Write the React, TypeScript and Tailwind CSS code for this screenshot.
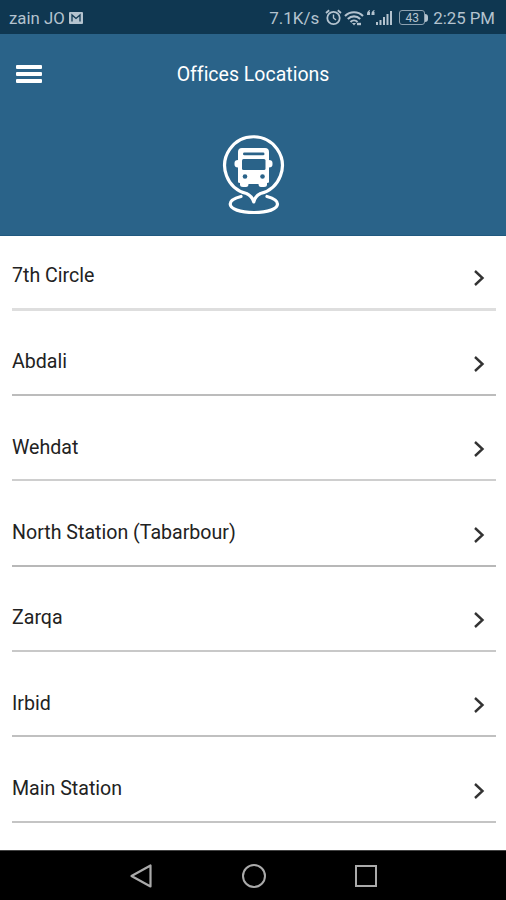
import React from "react";

const offices = [
  { name: "7th Circle", line: "h-[3px] bg-[#dedede]" },
  { name: "Abdali", line: "h-[2px] bg-[#bcbcbc]" },
  { name: "Wehdat", line: "h-[2px] bg-[#cecece]" },
  { name: "North Station (Tabarbour)", line: "h-[2px] bg-[#b8b8b8]" },
  { name: "Zarqa", line: "h-[2px] bg-[#c8c8c8]" },
  { name: "Irbid", line: "h-[2px] bg-[#c0c0c0]" },
  { name: "Main Station", line: "h-[2px] bg-[#c4c4c4]" },
];

function StatusBar() {
  return (
    <div className="flex h-[34px] items-center justify-between bg-[#0f3751] pt-[3px] pr-[11px] pl-[9px] text-[#b4c3cf]">
      <div className="flex items-center">
        <span className="pt-px text-[16.8px] whitespace-nowrap">zain JO</span>
        <svg className="mb-[2px] ml-[4px] h-[12px] w-[14px]" viewBox="0 0 14 12">
          <rect width="14" height="12" rx="1" fill="currentColor" />
          <path d="M3 9.500V3l4 3.400L11 3v6.500" fill="none" stroke="#0f3751" strokeWidth="1.3" />
        </svg>
      </div>
      <div className="flex items-center">
        <span className="text-[17px] whitespace-nowrap">7.1K/s</span>
        <svg className="mb-[2px] ml-[6px] h-[17px] w-[17px]" viewBox="0 0 17 17" fill="none" stroke="currentColor">
          <circle cx="8.5" cy="9" r="6.2" strokeWidth="1.8" />
          <path d="M8.5 5.5V9l2.5 2" strokeWidth="1.4" />
          <path d="M1 4l3.2-2.8M16 4l-3.2-2.8" strokeWidth="1.8" />
        </svg>
        <svg className="mb-px ml-[2px] h-[17px] w-[20px]" viewBox="0 0 20 17" fill="none" stroke="currentColor" strokeWidth="2.1">
          <path d="M1 6c5-5 13-5 18 0M3.8 9c3.6-3.5 8.8-3.5 12.4 0M6.5 12c2-2 5-2 7 0" />
          <path d="M8 13l2 2.5 2-2.5z" fill="currentColor" stroke="none" />
          <path d="M13 14h4" strokeWidth="2.4" />
        </svg>
        <svg className="mb-[4px] ml-[2px] h-[18px] w-[27px]" viewBox="0 0 27 18" fill="currentColor">
          <path d="M4 2C2 2.500 1 4 1 6v1h3V4H3l1-1zM8.500 2C6.500 2.500 5.500 4 5.500 6v1h3V4h-1l1-1z" />
          <path d="M10 14h2v3h-2zM13.500 12h2v5h-2zM17 9h2v8h-2zM20.500 6h2v11h-2zM24 3h2v14h-2z" />
        </svg>
        <div className="mb-[2px] ml-[6px] flex h-[15px] w-[26px] items-center justify-center rounded-[3px] border border-[#8da1b0] text-[12px]">
          43
        </div>
        <div className="mb-[2px] h-[8px] w-[3px] rounded-r-sm bg-[#b4c3cf]" />
        <span className="ml-[5px] text-[16.8px] whitespace-nowrap">2:25 PM</span>
      </div>
    </div>
  );
}

function BusPin() {
  return (
    <svg className="h-[84px] w-[64px]" viewBox="0 0 64 84" fill="none">
      <path
        d="M25.500 61.500A28.800 28.800 0 1 1 39.500 61.500Q34 64 32.800 70Q31 64 25.500 61.500Z"
        stroke="white"
        strokeWidth="3.200"
        strokeLinejoin="round"
      />
      <path
        d="M20 64.500C12 66.500 9.200 69 9.200 72C9.200 77 19 80.500 33 80.500S56.500 77 56.500 72C56.500 69 53 66.500 46 64.500"
        stroke="white"
        strokeWidth="3.200"
        strokeLinecap="round"
      />
      <path
        d="M21 16h23q4 0 4 4v8q3.500 0 3.500 3v1.500q0 3-3.500 3V50q0 1-2 1v1.500q0 2.500-3 2.500h-3q-2.500 0-2.500-3h-10q0 3-2.500 3h-3q-3 0-3-2.500V51q-2 0-2-1V35.500q-3.500 0-3.500-3V31q0-3 3.500-3v-8q0-4 4-4z"
        fill="white"
      />
      <rect x="22" y="20.500" width="21.500" height="2.800" rx="1.400" fill="#2a6389" />
      <rect x="21" y="27" width="23.500" height="11" rx="1.500" fill="#2a6389" />
      <circle cx="24" cy="44.500" r="2.300" fill="#2a6389" />
      <circle cx="41.500" cy="44.500" r="2.300" fill="#2a6389" />
    </svg>
  );
}

function NavBar() {
  return (
    <div className="flex h-[50px] items-center justify-between border-t border-[#444444] bg-black pr-[129px] pl-[129px]">
      <svg className="h-[26px] w-[23px]" viewBox="0 0 23 26" fill="none" stroke="#aaaaaa" strokeWidth="2.200">
        <path d="M21.500 2.500v21L2.500 13z" strokeLinejoin="round" />
      </svg>
      <div className="h-[24px] w-[24px] rounded-full border-2 border-[#aaaaaa]" />
      <div className="h-[22px] w-[22px] border-2 border-[#aaaaaa]" />
    </div>
  );
}

export default function App() {
  return (
    <div className="flex h-[900px] w-[506px] flex-col overflow-hidden bg-white font-['Roboto',sans-serif]">
      <StatusBar />

      <header className="h-[202px] border-b border-[#20597f] bg-[#2a6389]">
        <div className="grid h-[80px] grid-cols-[80px_1fr_80px] items-center">
          <div className="ml-[16px] flex w-[26px] flex-col gap-[3px]">
            <div className="h-[4px] rounded-[1px] bg-white" />
            <div className="h-[4px] rounded-[1px] bg-white" />
            <div className="h-[4px] rounded-[1px] bg-white" />
          </div>
          <h1 className="pt-[2px] text-center text-[19.5px] text-white [font-variant-ligatures:none]">
            Offices Locations
          </h1>
        </div>
        <div className="mt-[18px] flex justify-center">
          <BusPin />
        </div>
      </header>

      <ul className="-mt-[10.500px] min-h-0 flex-1 pr-[10px] pl-[12px]">
        {offices.map((office) => (
          <li key={office.name} className="flex h-[85.330px] flex-col">
            <div className="flex flex-1 items-center justify-between pt-[19px]">
              <span className="text-[19.6px] text-[#222222]">{office.name}</span>
              <svg className="mt-[4px] mr-[11px] h-[18px] w-[12px]" viewBox="0 0 12 18" fill="none">
                <path d="M2 2l7.500 7L2 16" stroke="#333333" strokeWidth="2.400" />
              </svg>
            </div>
            <div className={office.line} />
          </li>
        ))}
      </ul>

      <NavBar />
    </div>
  );
}
